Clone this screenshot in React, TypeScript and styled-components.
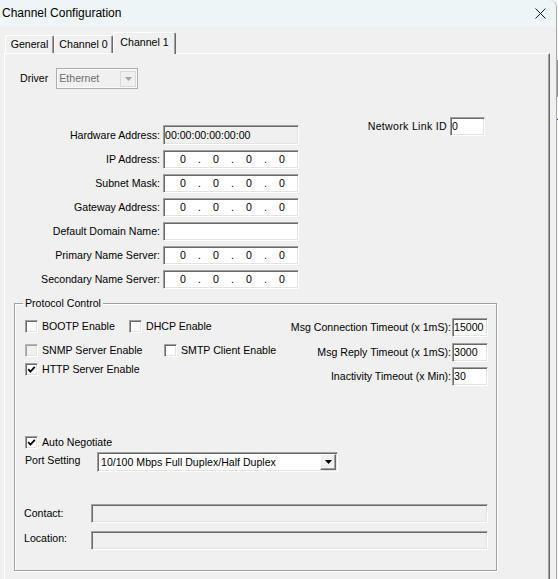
import styled, { createGlobalStyle } from 'styled-components';
import { ReactElement } from 'react';

const GlobalStyle = createGlobalStyle`
  html, body {
    margin: 0;
    padding: 0;
    background: #f0f0f0;
    overflow: hidden;
  }
  body {
    font-family: 'Liberation Sans', Arial, sans-serif;
    font-size: 10.6px;
    line-height: 13px;
    color: #000;
  }
`;

const Screen = styled.div`
  display: flex;
  width: 558px;
  height: 579px;
  overflow: hidden;
`;

const Window = styled.div`
  flex: none;
  width: 557px;
  height: 579px;
  box-sizing: border-box;
  display: flex;
  flex-direction: column;
  overflow: hidden;
  background: #f0f0f0;
  border-right: 1px solid #a6a6a6;
  border-top-right-radius: 8px;
`;

const Backdrop = styled.div`
  flex: 1;
  display: flex;
  flex-direction: column;
  background: #fafafa;
`;

const BackdropMark = styled.div<{ $top: number; $h: number; $color: string }>`
  margin-top: ${p => p.$top}px;
  height: ${p => p.$h}px;
  background: ${p => p.$color};
`;

const TitleBar = styled.div`
  flex: none;
  height: 27px;
  display: flex;
  align-items: center;
  justify-content: space-between;
  padding: 0 10px 0 2px;
  background: #edf5f7;
  font-size: 12px;
`;

const Body = styled.div`
  flex: 1;
  padding-left: 4px;
`;

const TabStrip = styled.div`
  position: relative;
  z-index: 1;
  display: flex;
  align-items: flex-end;
  height: 21px;
  margin: 5px 0 0 1px;
`;

const Tab = styled.div<{ $w: number; $active?: boolean }>`
  box-sizing: border-box;
  width: ${p => p.$w}px;
  height: ${p => (p.$active ? 22 : 18)}px;
  margin-bottom: ${p => (p.$active ? -1 : 0)}px;
  padding-top: ${p => (p.$active ? 3 : 2)}px;
  text-align: center;
  white-space: nowrap;
  background: #f0f0f0;
  border: 1px solid;
  border-bottom: none;
  border-color: #fff #696969 #fff #fff;
  box-shadow: inset -1px 0 0 #a0a0a0;
  border-radius: 2px 2px 0 0;
`;

const Panel = styled.div`
  box-sizing: border-box;
  width: 546px;
  height: 540px;
  display: flex;
  flex-direction: column;
  border-top: 1px solid #fff;
  border-left: 1px solid #fff;
  border-right: 1px solid #696969;
  box-shadow: inset -1px 0 0 #a0a0a0;
`;

const DriverRow = styled.div`
  display: flex;
  align-items: center;
  gap: 8px;
  margin: 14px 0 0 15px;
`;

const Combo = styled.div<{ $w: number; $h: number; $disabled?: boolean }>`
  box-sizing: border-box;
  width: ${p => p.$w}px;
  height: ${p => p.$h}px;
  display: flex;
  align-items: center;
  padding: ${p => (p.$disabled ? '0 1px 0 2px' : '0 1px 0 3px')};
  background: ${p => (p.$disabled ? '#f0f0f0' : '#fff')};
  color: ${p => (p.$disabled ? '#6d6d6d' : '#000')};
  border: 1px solid;
  border-color: ${p => (p.$disabled ? '#acacac' : '#a0a0a0 #fff #fff #a0a0a0')};
  box-shadow: ${p =>
    p.$disabled ? 'inset 0 0 0 1px #f9f9f9' : 'inset 1px 1px 0 #696969, inset -1px -1px 0 #e3e3e3'};
`;

const ComboText = styled.span`
  flex: 1;
  white-space: nowrap;
  overflow: hidden;
`;

const ComboButton = styled.span<{ $disabled?: boolean }>`
  flex: none;
  box-sizing: border-box;
  width: 16px;
  height: 16px;
  display: flex;
  align-items: center;
  justify-content: center;
  background: #f0f0f0;
  border: 1px solid;
  border-color: ${p => (p.$disabled ? '#d9d9d9' : '#fff #696969 #696969 #fff')};
  box-shadow: ${p => (p.$disabled ? 'none' : 'inset -1px -1px 0 #a0a0a0')};
`;

const FieldsSection = styled.div`
  display: flex;
  align-items: flex-start;
  margin-top: 28px;
`;

const AddressGrid = styled.div`
  display: grid;
  grid-template-columns: 155px 136px;
  column-gap: 3px;
  row-gap: 5px;
  align-items: center;
  padding-top: 8px;
`;

const FieldLabel = styled.span`
  text-align: right;
  white-space: nowrap;
`;

const TextBox = styled.div<{ $w: number; $h?: number; $readOnly?: boolean }>`
  box-sizing: border-box;
  width: ${p => p.$w}px;
  height: ${p => p.$h ?? 19}px;
  display: flex;
  align-items: center;
  padding-left: 1px;
  white-space: nowrap;
  background: ${p => (p.$readOnly ? '#f0f0f0' : '#fff')};
  border: 1px solid;
  border-color: #a0a0a0 #fff #fff #a0a0a0;
  box-shadow: inset 1px 1px 0 #696969, inset -1px -1px 0 #e3e3e3;
`;

const IpBox = styled(TextBox)`
  display: grid;
  grid-template-columns: 26px 7px 26px 7px 26px 7px 26px;
  align-items: center;
  padding-left: 6px;
  text-align: center;
`;

const LinkId = styled.div`
  display: flex;
  align-items: center;
  justify-content: flex-end;
  gap: 3px;
  width: 186px;
  letter-spacing: 0.3px;
`;

const GroupBox = styled.fieldset`
  box-sizing: border-box;
  width: 483px;
  min-width: 0;
  margin: 8px 0 0 9px;
  padding: 0 8px 20px 10px;
  border: 1px solid #a0a0a0;
  box-shadow: inset 1px 1px 0 #fff, 1px 1px 0 #fff;
`;

const GroupTitle = styled.legend`
  padding: 0 2px;
  margin-left: -2px;
  line-height: 13px;
  background: #f0f0f0;
`;

const TopRow = styled.div`
  display: flex;
  justify-content: space-between;
  align-items: flex-start;
  margin-top: 8px;
`;

const CheckList = styled.div`
  display: flex;
  flex-direction: column;
  padding-top: 2px;
`;

const CheckRow = styled.div<{ $gap: number }>`
  display: flex;
  margin-top: ${p => p.$gap}px;
`;

const CheckItem = styled.label<{ $w?: number }>`
  flex: none;
  display: flex;
  align-items: center;
  gap: 4px;
  height: 13px;
  width: ${p => (p.$w ? `${p.$w}px` : 'auto')};
  white-space: nowrap;
`;

const Box = styled.span<{ $disabled?: boolean }>`
  flex: none;
  box-sizing: border-box;
  width: 13px;
  height: 13px;
  display: flex;
  align-items: center;
  justify-content: center;
  background: ${p => (p.$disabled ? '#f0f0f0' : '#fff')};
  border: 1px solid;
  border-color: ${p => (p.$disabled ? '#b4b4b4 #fff #fff #b4b4b4' : '#a0a0a0 #fff #fff #a0a0a0')};
  box-shadow: ${p =>
    p.$disabled ? 'inset 1px 1px 0 #a0a0a0, inset -1px -1px 0 #e3e3e3' : 'inset 1px 1px 0 #696969, inset -1px -1px 0 #e3e3e3'};
`;

const TimeoutGrid = styled.div`
  display: grid;
  grid-template-columns: auto 36px;
  column-gap: 1px;
  row-gap: 5.5px;
  align-items: center;
`;

const FieldRow = styled.div<{ $top: number }>`
  display: flex;
  align-items: center;
  margin-top: ${p => p.$top}px;
`;

const InlineLabel = styled.span<{ $w: number; $shift?: number; $lift?: number }>`
  flex: none;
  width: ${p => p.$w}px;
  margin-left: ${p => p.$shift ?? 0}px;
  margin-bottom: ${p => (p.$lift ?? 0) * 2}px;
  white-space: nowrap;
`;

function CloseIcon(): ReactElement {
  return (
    <svg width="11" height="11" viewBox="0 0 11 11">
      <path d="M0.5 0.5 L10.5 10.5 M10.5 0.5 L0.5 10.5" stroke="#1a1a1a" strokeWidth="1" fill="none" />
    </svg>
  );
}

function DownArrow({ color }: { color: string }): ReactElement {
  return (
    <svg width="7" height="4" viewBox="0 0 7 4">
      <polygon points="0,0 7,0 3.5,4" fill={color} />
    </svg>
  );
}

function CheckBox({ label, checked, disabled, w }: { label: string; checked?: boolean; disabled?: boolean; w?: number }): ReactElement {
  return (
    <CheckItem $w={w}>
      <Box $disabled={disabled}>
        {checked && (
          <svg width="9" height="9" viewBox="0 0 9 9">
            <polyline points="1.2,4.2 3.4,6.6 7.8,1.8" stroke="#000" strokeWidth="1.8" fill="none" />
          </svg>
        )}
      </Box>
      {label}
    </CheckItem>
  );
}

function IpField(): ReactElement {
  return (
    <IpBox $w={136}>
      <span>0</span><span>.</span><span>0</span><span>.</span><span>0</span><span>.</span><span>0</span>
    </IpBox>
  );
}

const ipRows = ['IP Address:', 'Subnet Mask:', 'Gateway Address:'];

export default function App(): ReactElement {
  return (
    <>
      <GlobalStyle />
      <Screen>
        <Window>
          <TitleBar>
            <span>Channel Configuration</span>
            <CloseIcon />
          </TitleBar>
          <Body>
            <TabStrip>
              <Tab $w={49}>General</Tab>
              <Tab $w={59}>Channel 0</Tab>
              <Tab $w={63} $active>Channel 1</Tab>
            </TabStrip>
            <Panel>
              <DriverRow>
                <span>Driver</span>
                <Combo $w={82} $h={21} $disabled>
                  <ComboText>Ethernet</ComboText>
                  <ComboButton $disabled><DownArrow color="#a3a3a3" /></ComboButton>
                </Combo>
              </DriverRow>

              <FieldsSection>
                <AddressGrid>
                  <FieldLabel>Hardware Address:</FieldLabel>
                  <TextBox $w={136} $h={20} $readOnly>00:00:00:00:00:00</TextBox>
                  {ipRows.map(label => [
                    <FieldLabel key={label}>{label}</FieldLabel>,
                    <IpField key={`${label}-ip`} />,
                  ])}
                  <FieldLabel>Default Domain Name:</FieldLabel>
                  <TextBox $w={136} />
                  <FieldLabel>Primary Name Server:</FieldLabel>
                  <IpField />
                  <FieldLabel>Secondary Name Server:</FieldLabel>
                  <IpField />
                </AddressGrid>
                <LinkId>
                  <span>Network Link ID</span>
                  <TextBox $w={35}>0</TextBox>
                </LinkId>
              </FieldsSection>

              <GroupBox>
                <GroupTitle>Protocol Control</GroupTitle>
                <TopRow>
                  <CheckList>
                    <CheckRow $gap={0}>
                      <CheckBox label="BOOTP Enable" w={104} />
                      <CheckBox label="DHCP Enable" />
                    </CheckRow>
                    <CheckRow $gap={11}>
                      <CheckBox label="SNMP Server Enable" w={139} disabled />
                      <CheckBox label="SMTP Client Enable" />
                    </CheckRow>
                    <CheckRow $gap={6}>
                      <CheckBox label="HTTP Server Enable" checked />
                    </CheckRow>
                  </CheckList>
                  <TimeoutGrid>
                    <FieldLabel>Msg Connection Timeout (x 1mS):</FieldLabel>
                    <TextBox $w={36}>15000</TextBox>
                    <FieldLabel>Msg Reply Timeout (x 1mS):</FieldLabel>
                    <TextBox $w={36}>3000</TextBox>
                    <FieldLabel>Inactivity Timeout (x Min):</FieldLabel>
                    <TextBox $w={36}>30</TextBox>
                  </TimeoutGrid>
                </TopRow>

                <FieldRow $top={50}>
                  <CheckBox label="Auto Negotiate" checked />
                </FieldRow>
                <FieldRow $top={3}>
                  <InlineLabel $w={72} $lift={2}>Port Setting</InlineLabel>
                  <Combo $w={241} $h={20}>
                    <ComboText>10/100 Mbps Full Duplex/Half Duplex</ComboText>
                    <ComboButton><DownArrow color="#000" /></ComboButton>
                  </Combo>
                </FieldRow>
                <FieldRow $top={32}>
                  <InlineLabel $w={67} $shift={-1}>Contact:</InlineLabel>
                  <TextBox $w={398} $readOnly />
                </FieldRow>
                <FieldRow $top={8}>
                  <InlineLabel $w={67} $shift={-1} $lift={2}>Location:</InlineLabel>
                  <TextBox $w={398} $readOnly />
                </FieldRow>
              </GroupBox>
            </Panel>
          </Body>
        </Window>
        <Backdrop>
          <BackdropMark $top={60} $h={37} $color="#8f8f8f" />
          <BackdropMark $top={22} $h={1} $color="#3b3bc4" />
        </Backdrop>
      </Screen>
    </>
  );
}
